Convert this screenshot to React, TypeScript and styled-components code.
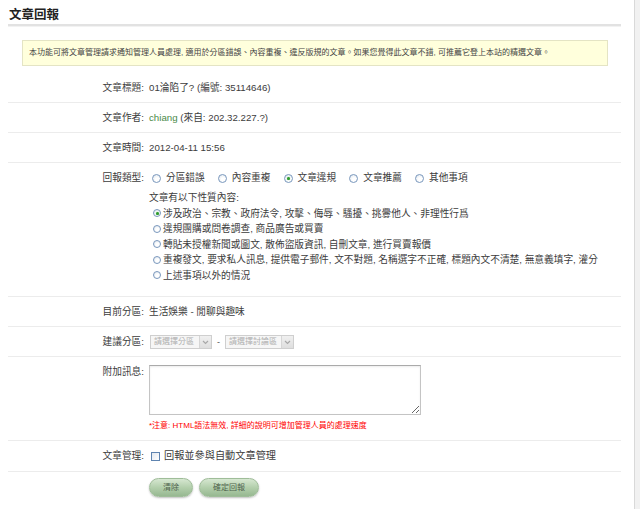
import React from 'react'
import styled, { createGlobalStyle } from 'styled-components'

const GlobalStyle = createGlobalStyle`
  html, body {
    margin: 0;
    padding: 0;
    background: #fff;
  }
  body {
    font-family: 'Liberation Sans', 'Noto Sans CJK TC', sans-serif;
    color: #3c3c3c;
  }
`

const Page = styled.div`
  display: flex;
  min-height: 100vh;
`

const Main = styled.main`
  flex: 1;
  padding: 0 13px 0 8px;
`

const SideRail = styled.div`
  width: 5px;
  border-left: 1px solid #d9d9d9;
  background: #f1f1f1;
`

const Header = styled.header`
  height: 26px;
  padding-left: 1px;
  border-bottom: 2px solid #e2e2e2;
  box-shadow: 0 1px 0 #f2f2f2;
  box-sizing: border-box;
  padding-top: 8px;
`

const Title = styled.h1`
  margin: 0;
  font-size: 12.5px;
  line-height: 14px;
  font-weight: bold;
  color: #222;
`

const Notice = styled.div`
  margin: 14px 13px 0 14px;
  padding: 6px 6px;
  background: #ffffdc;
  border: 1px solid #e4e4c4;
  font-size: 8px;
  line-height: 12px;
  color: #444;
`

const Form = styled.div`
  margin-top: 7px;
`

const Row = styled.div<{ $pt?: number; $pb?: number; $last?: boolean }>`
  display: grid;
  grid-template-columns: 136px 1fr;
  column-gap: 5px;
  padding: ${({ $pt }) => ($pt ?? 8)}px 0 ${({ $pb }) => ($pb ?? 7)}px;
  border-bottom: ${({ $last }) => ($last ? 'none' : '1px solid #ececec')};
  font-size: 9.7px;
  line-height: 14px;
`

const Label = styled.div`
  text-align: right;
`

const Value = styled.div`
  white-space: nowrap;
  min-width: 0;
`

const AuthorLink = styled.a`
  color: #4a8a48;
  text-decoration: none;
`

const RadioRow = styled.div`
  display: flex;
  align-items: center;
  height: 14px;
  padding-left: 3px;
`

const RadioOption = styled.label`
  display: inline-flex;
  align-items: center;
  gap: 5px;
  margin-right: 13px;
`

const RadioMark = styled.span<{ $checked?: boolean; $size?: number }>`
  position: relative;
  width: ${({ $size }) => $size ?? 9}px;
  height: ${({ $size }) => $size ?? 9}px;
  box-sizing: border-box;
  border-radius: 50%;
  border: 1px solid #7a98bd;
  background: radial-gradient(circle at 60% 65%, #ffffff 30%, #dbe3ec 100%);
  flex: none;

  &::after {
    content: '';
    display: ${({ $checked }) => ($checked ? 'block' : 'none')};
    position: absolute;
    left: 50%;
    top: 50%;
    width: 3px;
    height: 3px;
    margin: -1.5px 0 0 -1.5px;
    border-radius: 50%;
    background: #2f9a2f;
    box-shadow: 0 0 1px #5cc05c;
  }
`

const Nature = styled.div`
  margin-top: 5px;
  line-height: 15.5px;
`

const NatureOption = styled.label`
  display: flex;
  align-items: center;
  gap: 2px;
  padding-left: 4px;
`

const SelectRow = styled.div`
  display: flex;
  align-items: center;
  gap: 5px;
  height: 14px;
  padding-left: 1px;
`

const FakeSelect = styled.span<{ $w: number }>`
  display: inline-flex;
  align-items: stretch;
  width: ${({ $w }) => $w}px;
  height: 14px;
  box-sizing: border-box;
  border: 1px solid #cfcfcf;
  background: #f6f6f6;
  color: #b0b0b0;
  font-size: 8px;
  line-height: 12px;
`

const SelectText = styled.span`
  flex: 1;
  padding-left: 3px;
`

const SelectArrow = styled.span`
  width: 11px;
  display: flex;
  align-items: center;
  justify-content: center;
  background: linear-gradient(#f0f0f0, #dedede);
  border-left: 1px solid #d6d6d6;
`

const Dash = styled.span`
  color: #555;
  font-size: 9px;
`

const Message = styled.textarea`
  display: block;
  width: 272px;
  height: 50px;
  box-sizing: border-box;
  margin: 0;
  border: 1px solid #c4c4c4;
  border-top-color: #aaa;
  box-shadow: inset 0 1px 2px rgba(0, 0, 0, 0.08);
  font-family: inherit;
  font-size: 9.7px;
  resize: both;
  outline: none;
`

const Warning = styled.div`
  margin-top: 4px;
  color: #ff0000;
  font-size: 8px;
  line-height: 14px;
`

const CheckLabel = styled.label`
  display: inline-flex;
  align-items: center;
  gap: 4px;
  padding-left: 2px;
  font-size: 10.2px;
`

const CheckBox = styled.span`
  width: 9px;
  height: 9px;
  box-sizing: border-box;
  border: 1px solid #5f84b0;
  background: linear-gradient(135deg, #e4e9ef, #ffffff);
`

const Actions = styled.div`
  display: flex;
  gap: 6px;
`

const PillButton = styled.button<{ $w: number }>`
  width: ${({ $w }) => $w}px;
  height: 19px;
  padding: 0;
  border-radius: 10px;
  border: 1px solid #9fbd99;
  background: linear-gradient(#d6e7d1, #b3cfac 50%, #97b891);
  box-shadow: 0 1px 2px rgba(0, 0, 0, 0.25);
  color: #4f634d;
  font-family: inherit;
  font-size: 8px;
  line-height: 17px;
  cursor: pointer;
`

const reportTypes = [
  { label: '分區錯誤' },
  { label: '內容重複' },
  { label: '文章違規', checked: true },
  { label: '文章推薦' },
  { label: '其他事項' },
]

const natures = [
  { label: '涉及政治、宗教、政府法令, 攻擊、侮辱、騷擾、挑釁他人、非理性行爲', checked: true },
  { label: '違規團購或問卷調查, 商品廣告或買賣' },
  { label: '轉貼未授權新聞或圖文, 散佈盜版資訊, 自刪文章, 進行買賣報價' },
  { label: '重複發文, 要求私人訊息, 提供電子郵件, 文不對題, 名稱選字不正確, 標題內文不清楚, 無意義填字, 灌分' },
  { label: '上述事項以外的情況' },
]

const Chevron = () => (
  <svg width="7" height="5" viewBox="0 0 7 5">
    <path d="M1 1 L3.5 3.5 L6 1" fill="none" stroke="#a8a8a8" strokeWidth="1.2" />
  </svg>
)

export default function App() {
  return (
    <>
      <GlobalStyle />
      <Page>
        <Main>
          <Header>
            <Title>文章回報</Title>
          </Header>
          <Notice>
            本功能可將文章管理請求通知管理人員處理, 適用於分區錯誤、內容重複、違反版規的文章。如果您覺得此文章不錯, 可推薦它登上本站的精選文章。
          </Notice>
          <Form>
            <Row>
              <Label>文章標題:</Label>
              <Value>01淪陷了? (編號: 35114646)</Value>
            </Row>
            <Row>
              <Label>文章作者:</Label>
              <Value>
                <AuthorLink href="#">chiang</AuthorLink> (來自: 202.32.227.?)
              </Value>
            </Row>
            <Row>
              <Label>文章時間:</Label>
              <Value>2012-04-11 15:56</Value>
            </Row>
            <Row $pb={13}>
              <Label>回報類型:</Label>
              <Value>
                <RadioRow>
                  {reportTypes.map(({ label, checked }) => (
                    <RadioOption key={label}>
                      <RadioMark $checked={checked} />
                      {label}
                    </RadioOption>
                  ))}
                </RadioRow>
                <Nature>
                  <div>文章有以下性質內容:</div>
                  {natures.map(({ label, checked }) => (
                    <NatureOption key={label}>
                      <RadioMark $checked={checked} $size={8} />
                      {label}
                    </NatureOption>
                  ))}
                </Nature>
              </Value>
            </Row>
            <Row>
              <Label>目前分區:</Label>
              <Value>生活娛樂 - 閒聊與趣味</Value>
            </Row>
            <Row>
              <Label>建議分區:</Label>
              <Value>
                <SelectRow>
                  <FakeSelect $w={62}>
                    <SelectText>請選擇分區</SelectText>
                    <SelectArrow>
                      <Chevron />
                    </SelectArrow>
                  </FakeSelect>
                  <Dash>-</Dash>
                  <FakeSelect $w={69}>
                    <SelectText>請選擇討論區</SelectText>
                    <SelectArrow>
                      <Chevron />
                    </SelectArrow>
                  </FakeSelect>
                </SelectRow>
              </Value>
            </Row>
            <Row $pb={7}>
              <Label>附加訊息:</Label>
              <Value>
                <Message />
                <Warning>*注意: HTML語法無效, 詳細的說明可增加管理人員的處理速度</Warning>
              </Value>
            </Row>
            <Row $pb={6}>
              <Label>文章管理:</Label>
              <Value>
                <CheckLabel>
                  <CheckBox />
                  回報並參與自動文章管理
                </CheckLabel>
              </Value>
            </Row>
            <Row $last $pt={6}>
              <Label />
              <Value>
                <Actions>
                  <PillButton $w={44}>清除</PillButton>
                  <PillButton $w={60}>確定回報</PillButton>
                </Actions>
              </Value>
            </Row>
          </Form>
        </Main>
        <SideRail />
      </Page>
    </>
  )
}
